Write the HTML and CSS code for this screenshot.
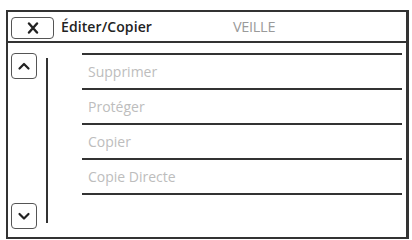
FILE: index.html
```html
<!DOCTYPE html>
<html lang="fr">
<head>
<meta charset="utf-8">
<link rel="stylesheet" href="styles.css">
</head>
<body>
<div class="screen">
  <div class="header">
    <div class="close-btn">
      <svg width="14" height="12" viewBox="0 0 14 12"><path d="M3 1.5 L11 10.5 M11 1.5 L3 10.5" stroke="#222" stroke-width="2.4" stroke-linecap="round"/></svg>
    </div>
    <div class="title">Éditer/Copier</div>
    <div class="status">VEILLE</div>
  </div>
  <div class="body">
    <div class="side">
      <div class="nav">
        <div class="nav-btn">
          <svg width="14" height="10" viewBox="0 0 14 10"><path d="M2.5 7.5 L7 3 L11.5 7.5" fill="none" stroke="#222" stroke-width="2.2" stroke-linecap="round" stroke-linejoin="round"/></svg>
        </div>
        <div class="nav-btn">
          <svg width="14" height="10" viewBox="0 0 14 10"><path d="M2.5 3 L7 7.5 L11.5 3" fill="none" stroke="#222" stroke-width="2.2" stroke-linecap="round" stroke-linejoin="round"/></svg>
        </div>
      </div>
      <div class="scroll"></div>
    </div>
    <ul class="list">
      <li class="item">Supprimer</li>
      <li class="item">Protéger</li>
      <li class="item">Copier</li>
      <li class="item">Copie Directe</li>
    </ul>
  </div>
</div>
</body>
</html>
```
FILE: styles.css
```css
html, body {
  margin: 0;
  padding: 0;
  background: #fff;
}
body {
  font-family: "Open Sans", "Liberation Sans", sans-serif;
}
.screen {
  box-sizing: border-box;
  margin: 10px 0 0 6px;
  width: 403px;
  height: 229px;
  border: 2px solid #333;
  border-right-width: 3px;
  display: flex;
  flex-direction: column;
}
.header {
  box-sizing: border-box;
  height: 31px;
  border-bottom: 2px solid #333;
  display: flex;
  align-items: center;
  padding-left: 3px;
}
.close-btn {
  box-sizing: border-box;
  width: 43px;
  height: 22px;
  margin-top: 2px;
  border: 1.5px solid #555;
  border-radius: 4px;
  display: flex;
  align-items: center;
  justify-content: center;
}
.title {
  margin-left: 7px;
  font-size: 14px;
  font-weight: 600;
  color: #222;
  letter-spacing: 0.1px;
  width: 172px;
}
.status {
  font-size: 14.5px;
  color: #9a9a9a;
  letter-spacing: -0.3px;
}
.body {
  flex: 1;
  display: flex;
  padding: 10px 4px 8px 3px;
}
.side {
  display: flex;
}
.nav {
  display: flex;
  flex-direction: column;
  justify-content: space-between;
}
.nav-btn {
  box-sizing: border-box;
  width: 26px;
  height: 26px;
  border: 1.5px solid #555;
  border-radius: 4px;
  display: flex;
  align-items: center;
  justify-content: center;
}
.scroll {
  width: 2px;
  background: #333;
  margin: 5px 0 6px 9px;
}
.list {
  list-style: none;
  margin: 0 0 0 34px;
  padding: 0;
  flex: 1;
  border-top: 2px solid #333;
  align-self: flex-start;
}
.item {
  box-sizing: border-box;
  height: 35px;
  border-bottom: 2px solid #333;
  display: flex;
  align-items: center;
  padding-left: 6px;
  font-size: 14px;
  color: #bdbdbd;
}
```
